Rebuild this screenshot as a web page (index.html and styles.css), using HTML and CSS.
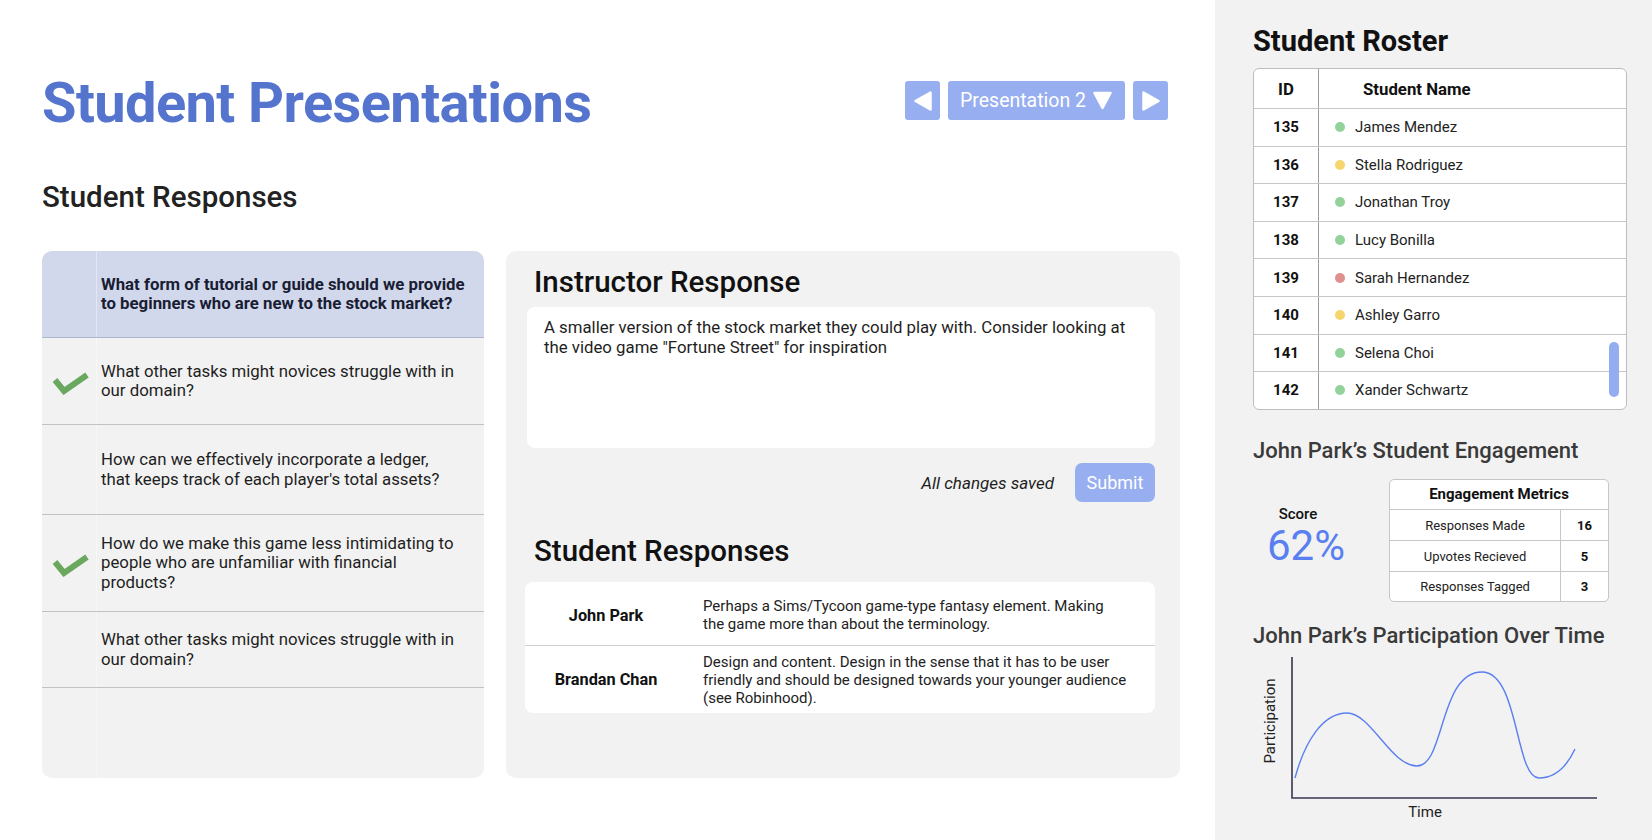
FILE: index.html
```html
<!DOCTYPE html>
<html lang="en">
<head>
<meta charset="utf-8">
<title>Student Presentations</title>
<link rel="stylesheet" href="styles.css">
</head>
<body>
<div class="page">
  <main class="main">
    <header class="top">
      <h1 class="title">Student Presentations</h1>
      <nav class="pager">
        <div class="pbtn">
          <svg width="20" height="22" viewBox="0 0 20 22"><path d="M2.5 11 L17.5 2.5 L17.5 19.5 Z" fill="#fff" stroke="#fff" stroke-width="2.5" stroke-linejoin="round"/></svg>
        </div>
        <div class="pselect">
          <span>Presentation 2</span>
          <svg width="19" height="19" viewBox="0 0 19 19"><path d="M1.5 2 L17.5 2 L9.5 17 Z" fill="#fff" stroke="#fff" stroke-width="2.5" stroke-linejoin="round"/></svg>
        </div>
        <div class="pbtn">
          <svg width="20" height="22" viewBox="0 0 20 22"><path d="M17.5 11 L2.5 2.5 L2.5 19.5 Z" fill="#fff" stroke="#fff" stroke-width="2.5" stroke-linejoin="round"/></svg>
        </div>
      </nav>
    </header>

    <h2 class="section">Student Responses</h2>

    <div class="panels">
      <section class="qlist">
        <div class="q sel">
          <div class="qmark"></div>
          <div class="qtext">What form of tutorial or guide should we provide to beginners who are new to the stock market?</div>
        </div>
        <div class="q">
          <div class="qmark"><svg class="check" width="40" height="24" viewBox="0 0 40 24"><polyline points="3,9 12,20 35,4" fill="none" stroke="#6aa85f" stroke-width="6"/></svg></div>
          <div class="qtext">What other tasks might novices struggle with in our domain?</div>
        </div>
        <div class="q">
          <div class="qmark"></div>
          <div class="qtext">How can we effectively incorporate a ledger, that keeps track of each player's total assets?</div>
        </div>
        <div class="q">
          <div class="qmark"><svg class="check" width="40" height="24" viewBox="0 0 40 24"><polyline points="3,9 12,20 35,4" fill="none" stroke="#6aa85f" stroke-width="6"/></svg></div>
          <div class="qtext">How do we make this game less intimidating to people who are unfamiliar with financial products?</div>
        </div>
        <div class="q">
          <div class="qmark"></div>
          <div class="qtext">What other tasks might novices struggle with in our domain?</div>
        </div>
        <div class="qfill"><div class="qmark"></div></div>
      </section>

      <section class="detail">
        <h3 class="dh">Instructor Response</h3>
        <div class="answer">A smaller version of the stock market they could play with. Consider looking at the video game "Fortune Street" for inspiration</div>
        <div class="saverow">
          <span class="saved">All changes saved</span>
          <div class="submit">Submit</div>
        </div>
        <h3 class="dh dh2">Student Responses</h3>
        <div class="resp">
          <div class="rrow r1">
            <div class="rname">John Park</div>
            <div class="rtext">Perhaps a Sims/Tycoon game-type fantasy element. Making the game more than about the terminology.</div>
          </div>
          <div class="rrow r2">
            <div class="rname">Brandan Chan</div>
            <div class="rtext">Design and content. Design in the sense that it has to be user friendly and should be designed towards your younger audience (see Robinhood).</div>
          </div>
        </div>
      </section>
    </div>
  </main>

  <aside class="side">
    <h2 class="sh">Student Roster</h2>
    <div class="roster">
      <div class="rr head"><div class="rid">ID</div><div class="rn">Student Name</div></div>
      <div class="rr"><div class="rid">135</div><div class="rn"><span class="dot g"></span>James Mendez</div></div>
      <div class="rr"><div class="rid">136</div><div class="rn"><span class="dot y"></span>Stella Rodriguez</div></div>
      <div class="rr"><div class="rid">137</div><div class="rn"><span class="dot g"></span>Jonathan Troy</div></div>
      <div class="rr"><div class="rid">138</div><div class="rn"><span class="dot g"></span>Lucy Bonilla</div></div>
      <div class="rr"><div class="rid">139</div><div class="rn"><span class="dot r"></span>Sarah Hernandez</div></div>
      <div class="rr"><div class="rid">140</div><div class="rn"><span class="dot y"></span>Ashley Garro</div></div>
      <div class="rr"><div class="rid">141</div><div class="rn"><span class="dot g"></span>Selena Choi</div></div>
      <div class="rr"><div class="rid">142</div><div class="rn"><span class="dot g"></span>Xander Schwartz</div></div>
      <div class="scroll"></div>
    </div>

    <h3 class="eh">John Park’s Student Engagement</h3>
    <div class="eng">
      <div class="score">
        <div class="score-l">Score</div>
        <div class="score-v">62%</div>
      </div>
      <div class="metrics">
        <div class="mh">Engagement Metrics</div>
        <div class="mr"><div class="ml">Responses Made</div><div class="mv">16</div></div>
        <div class="mr"><div class="ml">Upvotes Recieved</div><div class="mv">5</div></div>
        <div class="mr"><div class="ml">Responses Tagged</div><div class="mv">3</div></div>
      </div>
    </div>

    <h3 class="eh ch">John Park’s Participation Over Time</h3>
    <svg class="chart" width="360" height="180" viewBox="0 0 360 180">
      <path d="M42,129 C52,92 70,64 94,64 C118,64 138,117 164,117 C192,117 186,23 229,23 C266,23 262,129 286,129 C304,129 315,115 322,100" fill="none" stroke="#5b7ff0" stroke-width="1.4"/>
      <polyline points="39,8 39,149 344,149" fill="none" stroke="#3b3450" stroke-width="1.6"/>
      <text class="axis" x="0" y="0" transform="translate(22,72) rotate(-90)" text-anchor="middle">Participation</text>
      <text class="axis" x="172" y="168" text-anchor="middle">Time</text>
    </svg>
  </aside>
</div>
</body>
</html>
```

FILE: styles.css
```css
* { box-sizing: border-box; margin: 0; padding: 0; }

body {
  width: 1652px;
  height: 840px;
  overflow: hidden;
  background: #fff;
  font-family: Roboto, "Noto Sans", "Liberation Sans", sans-serif;
  color: #1e1e1e;
}

.page { display: flex; height: 840px; }

/* ---------- main column ---------- */
.main { width: 1215px; padding: 0 35px 0 42px; }

.top {
  display: flex;
  justify-content: space-between;
  align-items: center;
  padding: 68px 12px 0 0;
  height: 138px;
}

.title {
  font-size: 56px;
  line-height: 70px;
  font-weight: 700;
  letter-spacing: -0.6px;
  color: #5574cd;
}

.pager { display: flex; gap: 8px; height: 39px; margin-bottom: 5px; }

.pbtn, .pselect {
  background: #97aef0;
  border-radius: 3px;
  display: flex;
  align-items: center;
  justify-content: center;
}
.pbtn { width: 35px; }
.pselect {
  width: 177px;
  justify-content: space-between;
  padding: 0 13px 0 12px;
  color: #fff;
  font-size: 19.5px;
}

.section {
  margin-top: 42px;
  font-size: 29.5px;
  line-height: 34px;
  font-weight: 500;
  color: #222;
}

.panels { display: flex; gap: 22px; margin-top: 37px; height: 527px; }

/* question list */
.qlist {
  width: 442px;
  background: #f2f2f2;
  border-radius: 10px;
  overflow: hidden;
  display: flex;
  flex-direction: column;
}

.q { display: flex; align-items: center; border-bottom: 1px solid #c2c2c2; }
.q:nth-child(1) { height: 87px; }
.q:nth-child(2) { height: 87px; }
.q:nth-child(3) { height: 90px; }
.q:nth-child(4) { height: 97px; }
.q:nth-child(5) { height: 76px; }

.q.sel { background: #d1d8eb; border-bottom-color: #aeb6cc; }

.qmark {
  width: 55px;
  align-self: stretch;
  flex: none;
  display: flex;
  align-items: center;
  justify-content: center;
  border-right: 1px solid rgba(255, 255, 255, 0.4);
  padding: 4px 0 0 6px;
}

.qtext {
  padding: 0 26px 0 4px;
  font-size: 16.8px;
  line-height: 19.5px;
  color: #1e1e1e;
}
.q.sel .qtext { padding-right: 12px; font-weight: 700; font-size: 16.8px; color: #1a1d33; }

.qfill { flex: 1; display: flex; }

/* detail panel */
.detail {
  width: 674px;
  background: #f2f2f2;
  border-radius: 10px;
  padding-top: 14px;
}

.dh {
  margin-left: 28px;
  font-size: 29.5px;
  line-height: 34px;
  font-weight: 500;
  color: #111;
}
.dh2 { margin-top: 32px; }

.answer {
  margin: 8px 0 0 21px;
  width: 628px;
  height: 141px;
  background: #fff;
  border-radius: 8px;
  padding: 11px 17px;
  font-size: 16.8px;
  line-height: 19.5px;
  color: #1e1e1e;
}

.saverow {
  display: flex;
  justify-content: flex-end;
  align-items: center;
  gap: 21px;
  margin: 15px 25px 0 0;
}
.saved { font-style: italic; font-size: 17px; color: #1e1e1e; }
.submit {
  width: 80px;
  height: 39px;
  border-radius: 7px;
  background: #97aef0;
  color: #fff;
  font-size: 18px;
  display: flex;
  align-items: center;
  justify-content: center;
}

.resp {
  margin: 14px 0 0 19px;
  width: 630px;
  background: #fff;
  border-radius: 8px;
}
.rrow { display: grid; grid-template-columns: 162px 1fr; align-items: center; }
.rrow + .rrow { border-top: 1px solid #cfcfcf; }
.r1 { height: 63px; padding-top: 3px; }
.r2 { height: 68px; }
.rname { text-align: center; font-weight: 700; font-size: 16.3px; color: #111; }
.rtext { padding: 0 20px 0 16px; font-size: 15px; line-height: 18px; color: #222; }
.r1 .rtext { padding-right: 40px; }

/* ---------- sidebar ---------- */
.side {
  width: 437px;
  background: #f2f2f2;
  padding: 24px 0 0 38px;
}

.sh { font-size: 29px; line-height: 34px; font-weight: 700; color: #111; }

.roster {
  position: relative;
  margin-top: 10px;
  width: 374px;
  background: #fff;
  border: 1px solid #bdbdbd;
  border-radius: 6px;
  overflow: hidden;
}

.rr {
  display: grid;
  grid-template-columns: 65px 1fr;
  height: 37.6px;
  border-top: 1px solid #c6c6c6;
}
.rr.head { height: 39px; border-top: none; font-weight: 700; }

.rid {
  display: flex;
  align-items: center;
  justify-content: center;
  border-right: 1px solid #9c9c9c;
  font-weight: 700;
  font-size: 15px;
  color: #111;
}
.rn {
  display: flex;
  align-items: center;
  gap: 10px;
  padding-left: 16px;
  font-size: 15px;
  color: #222;
}
.head .rn { padding-left: 44px; font-size: 16.8px; color: #111; }
.head .rid { font-size: 16.8px; }

.dot { width: 10px; height: 10px; border-radius: 50%; flex: none; }
.dot.g { background: #93d29a; }
.dot.y { background: #f5d66e; }
.dot.r { background: #de8f8f; }

.scroll {
  position: absolute;
  left: 355px;
  top: 273px;
  width: 10px;
  height: 55px;
  border-radius: 5px;
  background: #94acf0;
}

.eh {
  margin-top: 28px;
  font-size: 22px;
  line-height: 26px;
  font-weight: 500;
  color: #3a3a3a;
}

.eng { display: flex; margin-top: 15px; }
.score { width: 106px; margin-top: 26px; text-align: center; }
.score-l { font-size: 15px; line-height: 18px; font-weight: 500; color: #111; padding-right: 16px; }
.score-v { font-size: 42px; line-height: 44px; color: #5a7ff0; margin-top: 1px; }

.metrics {
  margin-left: 30px;
  width: 220px;
  background: #fff;
  border: 1px solid #c6c6c6;
  border-radius: 5px;
  overflow: hidden;
}
.mh {
  height: 30px;
  display: flex;
  align-items: center;
  justify-content: center;
  border-bottom: 1px solid #c6c6c6;
  font-weight: 700;
  font-size: 15px;
  color: #111;
}
.mr { display: grid; grid-template-columns: 171px 1fr; height: 30.5px; }
.mr + .mr { border-top: 1px solid #c6c6c6; }
.ml, .mv { display: flex; align-items: center; justify-content: center; font-size: 13px; color: #222; }
.ml { border-right: 1px solid #c6c6c6; }
.mv { font-weight: 700; color: #111; }

.ch { margin-top: 21px; }

.chart { display: block; margin-top: 0; }
.axis { font-family: Roboto, "Noto Sans", sans-serif; font-size: 15px; fill: #222; }
```
